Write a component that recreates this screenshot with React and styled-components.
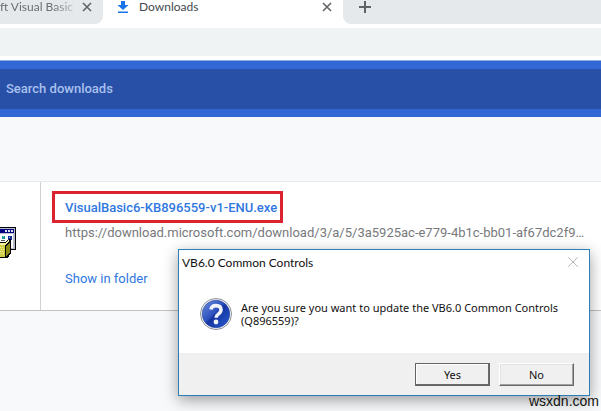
import React, { useState } from "react";
import styled, { createGlobalStyle } from "styled-components";

const GlobalStyle = createGlobalStyle`
  * {
    box-sizing: border-box;
  }

  body {
    margin: 0;
    background: #f8f9fa;
    font-family: Roboto, "Liberation Sans", sans-serif;
    overflow: hidden;
  }

  button {
    font: inherit;
    color: inherit;
    padding: 0;
  }
`;

const Page = styled.div`
  position: relative;
  min-height: 100vh;
`;

const TabStrip = styled.nav`
  display: flex;
  height: 28px;
  padding-bottom: 4px;
  background: #fff;
  font-family: Lato, "Open Sans", sans-serif;
  font-size: 12px;
`;

const Tab = styled.div`
  display: flex;
  align-items: center;
  flex: none;
  width: ${(props) => (props.$active ? 240 : 103)}px;
  padding: 0 11px 10px ${(props) => (props.$active ? 14 : 0)}px;
  border-bottom-right-radius: 8px;
  background: ${(props) => (props.$active ? "#fff" : "#e6e9eb")};
  color: ${(props) => (props.$active ? "#45494d" : "#6b6f73")};
`;

const TabTitle = styled.span`
  flex: 1;
  line-height: 14px;
  white-space: nowrap;
  mask-image: ${(props) =>
    props.$fade ? "linear-gradient(to right, #000 65%, transparent)" : "none"};
`;

const IconButton = styled.button`
  display: flex;
  flex: none;
  border: 0;
  background: none;
  color: ${(props) => props.$color || "#5f6368"};
`;

const TabIcon = styled.svg`
  flex: none;
  margin-right: 10px;
`;

const NewTabArea = styled.div`
  flex: 1;
  padding: 1px 15px;
  border-bottom-left-radius: 8px;
  background: #e6e9eb;
`;

const AddressBar = styled.div`
  height: 32px;
  border-bottom: 4px solid #fff;
  background: #f0f3f4;
`;

const SearchBar = styled.div`
  padding: 8px 0;
  border-top: 1px solid #8daae2;
  background: #3367d6;
`;

const SearchInput = styled.input`
  display: block;
  width: 100%;
  height: 40px;
  padding: 0 6px 2px;
  border: 0;
  outline: 0;
  background: #2850a7;
  color: #fff;
  font: 500 13px Roboto, sans-serif;

  &::placeholder {
    color: #a9c0ee;
    opacity: 1;
  }
`;

const Card = styled.section`
  display: flex;
  margin-top: 64px;
  border-top: 1px solid #e8eaec;
  border-bottom: 1px solid #bfc1c3;
  background: #fff;
`;

const FileIcon = styled.div`
  flex: none;
  width: 41px;
  padding-top: 45px;
  border-right: 1px solid #d0d2d4;
`;

const Details = styled.div`
  flex: 1;
  min-width: 0;
  padding: 9px 15px 21px 11px;
  font-size: 13px;
  line-height: 20px;
`;

const Highlight = styled.div`
  width: fit-content;
  padding: 4px 3px 2px 10px;
  border: 3px solid #d9232e;
`;

const Link = styled.a`
  color: #3078e0;
  font-weight: ${(props) => (props.$bold ? 500 : 400)};
  text-decoration: none;
`;

const Source = styled.div`
  margin: 0 0 26px;
  padding-left: 13px;
  color: #77797c;
  white-space: nowrap;
`;

const Actions = styled.div`
  padding-left: 13px;
`;

const Dialog = styled.div`
  position: absolute;
  top: 249px;
  left: 178px;
  right: 11px;
  border: 1px solid #2a7fb8;
  background: #fff;
  box-shadow: 0 4px 14px rgba(0, 0, 0, 0.38);
  color: #111;
`;

const DialogTitle = styled.div`
  display: flex;
  align-items: center;
  justify-content: space-between;
  height: 24px;
  padding: 0 10px 0 3px;
  font-family: Lato, "Open Sans", sans-serif;
  font-size: 12px;
`;

const DialogBody = styled.div`
  display: flex;
  padding: 23px 20px 22px 20px;
  gap: 8px;
`;

const Message = styled.p`
  margin: 4px 0 0;
  font-family: "Noto Sans", sans-serif;
  font-size: 11px;
  line-height: 13px;
`;

const DialogFooter = styled.div`
  display: flex;
  justify-content: flex-end;
  gap: 9px;
  padding: 10px 15px 9px;
  background: #f0f0f0;
`;

const DialogButton = styled.button`
  width: 75px;
  height: 23px;
  border: 1px solid;
  border-color: ${(props) =>
    props.$primary ? "#646464" : "#fff #696969 #696969 #fff"};
  background: #f0f0f0;
  box-shadow: ${(props) =>
    props.$primary
      ? "inset -1px -1px #696969, inset 1px 1px #fff"
      : "inset -1px -1px #a0a0a0, inset 1px 1px #e3e3e3"};
  font-family: "Noto Sans", sans-serif;
  font-size: 11px;
`;

const Watermark = styled.div`
  position: absolute;
  right: 2px;
  bottom: 2px;
  color: #111;
  font: 14px/16px "Liberation Sans", sans-serif;
`;

const QuestionSvg = styled.svg`
  flex: none;
`;

const CloseIcon = ({ size, weight }) => (
  <svg width={size} height={size} viewBox="0 0 10 10">
    <path d="M1 1l8 8M9 1l-8 8" stroke="currentColor" strokeWidth={weight} />
  </svg>
);

const InstallerIcon = () => (
  <svg width="17" height="33" viewBox="0 0 17 33" shapeRendering="crispEdges">
    <path d="M0 0h16v23H0z" fill="#000" />
    <path d="M0 1h15v21H0z" fill="#b9bbcf" />
    <path d="M0 2h14v4H0z" fill="#000080" />
    <path d="M5 3h2v2H5zM8 3h2v2H8zM11 3h2v2h-2z" fill="#dfe0ee" />
    <path d="M0 7h13v14H0z" fill="#fff" />
    <path d="M2 9h3v3H2z" fill="#12959b" />
    <path d="M3 9h1v1H3z" fill="#70e0e0" />
    <path d="M8 9h4v4H8z" fill="#1a2e9a" />
    <path d="M9 10h1v1H9z" fill="#55c8e8" />
    <path d="M1 13h4v1H1zM8 14h2v1H8z" fill="#555" />
    <path d="M0 15h5l5-3h1v14l-3 5H0z" fill="#000" />
    <path d="M0 18h5v12H0z" fill="#d0cd48" />
    <path d="M0 16h5l4-3v2l-4 3H0z" fill="#f5f19a" />
    <path d="M6 19l4-4v10l-3 4H6z" fill="#8d8a16" />
    <path
      d="M0 20h1v1H0zM2 20h1v1H2zM1 22h1v1H1zM3 22h1v1H3zM0 24h1v1H0zM2 24h1v1H2zM1 26h1v1H1zM3 26h1v1H3z"
      fill="#f0eca0"
    />
  </svg>
);

const QuestionIcon = () => (
  <QuestionSvg width="34" height="34" viewBox="0 0 34 34">
    <defs>
      <linearGradient id="ball" x1="0" y1="0" x2="1" y2="1">
        <stop offset="0" stopColor="#6f8fe0" />
        <stop offset="0.45" stopColor="#2b50bd" />
        <stop offset="0.5" stopColor="#1534a0" />
        <stop offset="1" stopColor="#2a5ed6" />
      </linearGradient>
    </defs>
    <circle cx="17" cy="17" r="15.5" fill="#fff" stroke="#8b8f99" />
    <circle cx="17" cy="17" r="13.8" fill="url(#ball)" stroke="#213f94" strokeWidth="0.6" />
    <path
      d="M12 12.6c.4-3 2.3-4 5-4 3 0 5 1.5 5 4.2 0 2.3-1.3 3.3-2.7 4.3-1.5 1.1-2.2 1.7-2.2 3.7"
      fill="none"
      stroke="#f2f3fa"
      strokeWidth="3.6"
    />
    <circle cx="17" cy="25" r="2.4" fill="#f2f3fa" />
  </QuestionSvg>
);

const App = () => {
  const [open, setOpen] = useState(true);
  const closeDialog = () => setOpen(false);

  return (
    <Page>
      <GlobalStyle />
      <TabStrip>
        <Tab>
          <TabTitle $fade>ft Visual Basic</TabTitle>
          <IconButton aria-label="Close tab">
            <CloseIcon size={10} weight={1.6} />
          </IconButton>
        </Tab>
        <Tab $active>
          <TabIcon width="12" height="14" viewBox="0 0 12 14">
            <path d="M4 1h4v4h3.5L6 10 .5 5H4zM1 11.5h10V13H1z" fill="#1a73e8" />
          </TabIcon>
          <TabTitle>Downloads</TabTitle>
          <IconButton aria-label="Close tab">
            <CloseIcon size={10} weight={1.6} />
          </IconButton>
        </Tab>
        <NewTabArea>
          <IconButton aria-label="New tab">
            <svg width="14" height="12" viewBox="0 0 14 12">
              <path d="M1 6h12M7 0v12" stroke="currentColor" strokeWidth="2" />
            </svg>
          </IconButton>
        </NewTabArea>
      </TabStrip>
      <AddressBar />
      <SearchBar>
        <SearchInput aria-label="Search downloads" placeholder="Search downloads" />
      </SearchBar>

      <Card>
        <FileIcon>
          <InstallerIcon />
        </FileIcon>
        <Details>
          <Highlight>
            <Link href="#file" $bold>
              VisualBasic6-KB896559-v1-ENU.exe
            </Link>
          </Highlight>
          <Source>
            https://download.microsoft.com/download/3/a/5/3a5925ac-e779-4b1c-bb01-af67dc2f9…
          </Source>
          <Actions>
            <Link href="#folder">Show in folder</Link>
          </Actions>
        </Details>
      </Card>

      {open && (
        <Dialog role="dialog" aria-labelledby="dialog-title">
          <DialogTitle>
            <span id="dialog-title">VB6.0 Common Controls</span>
            <IconButton aria-label="Close" $color="#b5b5b5" onClick={closeDialog}>
              <CloseIcon size={12} weight={0.8} />
            </IconButton>
          </DialogTitle>
          <DialogBody>
            <QuestionIcon />
            <Message>
              Are you sure you want to update the VB6.0 Common Controls (Q896559)?
            </Message>
          </DialogBody>
          <DialogFooter>
            <DialogButton $primary onClick={closeDialog}>
              Yes
            </DialogButton>
            <DialogButton onClick={closeDialog}>No</DialogButton>
          </DialogFooter>
        </Dialog>
      )}
      <Watermark>wsxdn.com</Watermark>
    </Page>
  );
};

export default App;
